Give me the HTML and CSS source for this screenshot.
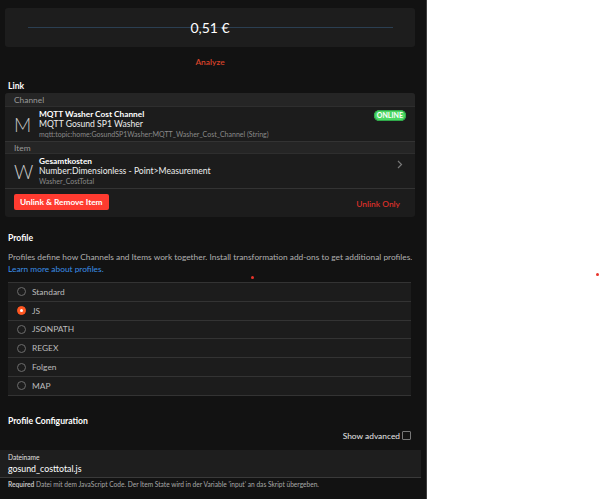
FILE: index.html
```html
<!DOCTYPE html>
<html>
<head>
<meta charset="utf-8">
<link rel="stylesheet" href="styles.css">
</head>
<body>
<div class="page">
  <div class="value-card">
    <div class="gauge-line"></div>
    <div class="value">0,51 €</div>
  </div>
  <div class="analyze">Analyze</div>

  <div class="block-title t-link">Link</div>
  <div class="link-card">
    <div class="group-title g-channel">Channel</div>
    <div class="li">
      <div class="letter">M</div>
      <div class="li-text">
        <div class="li-row">
          <div class="li-title">MQTT Washer Cost Channel</div>
          <div class="badge">ONLINE</div>
        </div>
        <div class="li-sub">MQTT Gosund SP1 Washer</div>
        <div class="li-foot">mqtt:topic:home:GosundSP1Washer:MQTT_Washer_Cost_Channel (String)</div>
      </div>
    </div>
    <div class="group-title g-item">Item</div>
    <div class="li">
      <div class="letter">W</div>
      <div class="li-text">
        <div class="li-row">
          <div class="li-title">Gesamtkosten</div>
          <svg class="chev" width="6" height="9" viewBox="0 0 6 9"><path d="M1 1 L4.5 4.5 L1 8" fill="none" stroke="#777" stroke-width="1.2"/></svg>
        </div>
        <div class="li-sub">Number:Dimensionless - Point&gt;Measurement</div>
        <div class="li-foot">Washer_CostTotal</div>
      </div>
    </div>
    <div class="actions">
      <div class="btn-red">Unlink &amp; Remove Item</div>
      <div class="btn-link">Unlink Only</div>
    </div>
  </div>

  <div class="block-title t-profile">Profile</div>
  <div class="para">Profiles define how Channels and Items work together. Install transformation add-ons to get additional profiles.</div>
  <div class="para-link">Learn more about profiles.</div>

  <div class="radio-list">
    <div class="radio-row"><span class="radio"></span><span class="rlabel">Standard</span></div>
    <div class="radio-row"><span class="radio on"></span><span class="rlabel">JS</span></div>
    <div class="radio-row"><span class="radio"></span><span class="rlabel">JSONPATH</span></div>
    <div class="radio-row"><span class="radio"></span><span class="rlabel">REGEX</span></div>
    <div class="radio-row"><span class="radio"></span><span class="rlabel">Folgen</span></div>
    <div class="radio-row"><span class="radio"></span><span class="rlabel">MAP</span></div>
  </div>

  <div class="block-title t-config">Profile Configuration</div>
  <div class="advanced"><span>Show advanced</span><span class="checkbox"></span></div>
  <div class="input-field">
    <div class="input-label">Dateiname</div>
    <div class="input-value">gosund_costtotal.js</div>
  </div>
  <div class="helper"><b>Required</b> Datei mit dem JavaScript Code. Der Item State wird in der Variable 'input' an das Skript übergeben.</div>

  <span class="dot dot1"></span>
</div>
<span class="dot dot2"></span>
</body>
</html>
```

FILE: styles.css
```css
html, body {
  margin: 0;
  padding: 0;
  background: #ffffff;
}
body {
  font-family: "Lato", "Liberation Sans", sans-serif;
  position: relative;
  width: 600px;
  height: 499px;
  overflow: hidden;
}
.page {
  width: 427px;
  height: 499px;
  background: #121212;
  border-right: 1px solid #3d3d3d;
  position: relative;
  padding-top: 8px;
  box-sizing: border-box;
  color: #fff;
}
.value-card {
  margin: 0 11px 0 5px;
  height: 39px;
  background: #1d1d1d;
  border-radius: 3px;
  display: grid;
  align-items: center;
  justify-items: center;
}
.gauge-line, .value {
  grid-area: 1 / 1;
}
.gauge-line {
  width: 365px;
  height: 1px;
  background: #2b3f52;
}
.value {
  font-size: 14px;
  color: #fff;
  line-height: 16px;
}
.analyze {
  text-align: center;
  color: #d7432a;
  font-size: 8.4px;
  font-weight: 600;
  line-height: 12px;
  margin-top: 9px;
  padding-right: 6px;
}
.block-title {
  font-size: 8.6px;
  font-weight: 700;
  line-height: 12px;
  padding-left: 8px;
  color: #fff;
}
.t-link { margin-top: 12px; }
.link-card {
  margin: 1px 11px 0 5px;
  background: #1c1c1c;
  border-radius: 3px;
  overflow: hidden;
}
.group-title {
  background: #252525;
  color: #9a9a9a;
  font-size: 8.4px;
  padding-left: 9px;
  display: flex;
  align-items: center;
}
.g-channel { height: 13px; }
.g-item { height: 11px; border-top: 1px solid #333; }
.li {
  display: flex;
  height: 35px;
  border-top: 1px solid #2e2e2e;
  box-sizing: border-box;
}
.letter {
  width: 25px;
  padding-left: 9px;
  font-size: 19px;
  font-weight: 300;
  color: #c8c8c8;
  line-height: 35px;
}
.li-text {
  flex: 1;
  padding-top: 2px;
  padding-right: 9px;
}
.li-row {
  display: flex;
  justify-content: space-between;
  align-items: center;
  height: 10px;
}
.li-title {
  font-size: 8.3px;
  font-weight: 700;
  color: #fff;
  line-height: 10px;
}
.li-sub {
  font-size: 8.6px;
  color: #eee;
  line-height: 11px;
}
.li-foot {
  font-size: 7px;
  color: #8a8a8a;
  line-height: 9px;
}
.badge {
  background: #4cd964;
  color: #fff;
  font-size: 7px;
  font-weight: 700;
  border-radius: 6px;
  padding: 0 3px;
  line-height: 11px;
  height: 11px;
  margin-top: 3px;
  box-shadow: 0 0 0 1px #2fa84a inset;
}
.chev { margin-right: 3px; margin-top: 6px; }
.actions {
  border-top: 1px solid #333;
  height: 28px;
  display: flex;
  align-items: center;
  justify-content: space-between;
  padding: 0 15px 0 9px;
}
.btn-red {
  background: #ff3b30;
  color: #fff;
  font-size: 8.3px;
  font-weight: 700;
  line-height: 16px;
  padding: 0 6px;
  border-radius: 2px;
  margin-bottom: 2px;
}
.btn-link {
  color: #d8302a;
  font-size: 8.4px;
  font-weight: 600;
  margin-top: 1px;
}
.t-profile { margin-top: 15px; }
.para {
  margin-top: 7px;
  padding-left: 8px;
  font-size: 8.35px;
  line-height: 12px;
  color: #b0b0b0;
}
.para-link {
  padding-left: 8px;
  font-size: 8.35px;
  line-height: 12px;
  color: #3a8ee6;
}
.radio-list {
  margin: 7px 15px 0 8px;
  background: #1c1c1c;
  border-top: 1px solid #333;
}
.radio-row {
  height: 17.8px;
  border-bottom: 1px solid #333;
  display: flex;
  align-items: center;
}
.radio {
  width: 7px;
  height: 7px;
  border: 1.3px solid #6c6c6c;
  border-radius: 50%;
  margin-left: 9px;
  margin-right: 6px;
  box-sizing: content-box;
}
.radio.on {
  border-color: #ff5722;
  background: #ff5722;
  position: relative;
}
.radio.on::after {
  content: "";
  position: absolute;
  width: 3px;
  height: 3px;
  left: 2px;
  top: 2px;
  background: #fff;
  border-radius: 50%;
}
.rlabel {
  font-size: 8.4px;
  color: #bdbdbd;
}
.t-config { margin-top: 19px; }
.advanced {
  display: flex;
  justify-content: flex-end;
  align-items: center;
  padding-right: 15px;
  margin-top: 3px;
  font-size: 8.4px;
  color: #e6e6e6;
  height: 12px;
  gap: 2px;
}
.checkbox {
  width: 7px;
  height: 7px;
  border: 1px solid #777;
  border-radius: 1px;
}
.input-field {
  margin-top: 8px;
  margin-right: 5px;
  background: #1e1e1e;
  height: 28px;
  border-bottom: 1px solid #3a3a3a;
  box-sizing: border-box;
  padding: 3.5px 0 0 8px;
}
.input-label {
  font-size: 6.6px;
  color: #e0e0e0;
  line-height: 9px;
}
.input-value {
  font-size: 8.8px;
  color: #fff;
  line-height: 13px;
}
.helper {
  padding-left: 8px;
  margin-top: 2.5px;
  font-size: 6.6px;
  color: #a8a8a8;
  line-height: 9px;
}
.helper b { color: #c4c4c4; }
.dot {
  position: absolute;
  width: 3px;
  height: 3px;
  border-radius: 50%;
  background: #e8332a;
}
.dot1 { left: 251px; top: 276px; }
.dot2 { left: 596px; top: 273px; }
```
